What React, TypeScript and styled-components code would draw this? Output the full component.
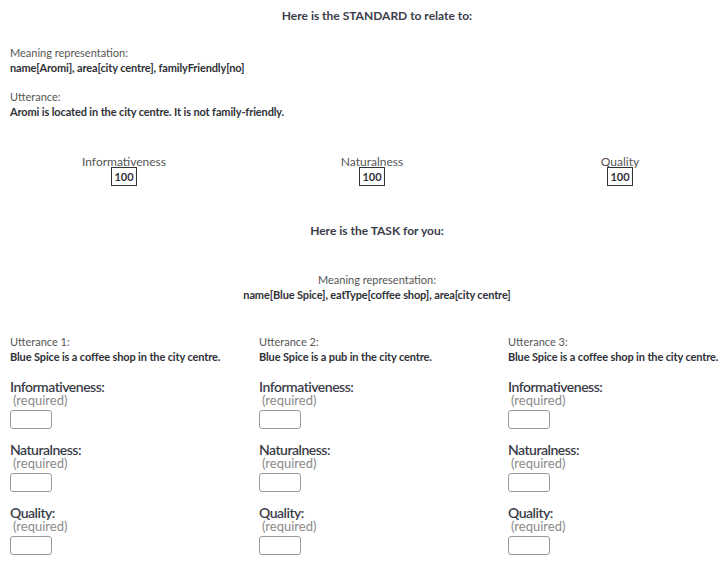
import React from 'react'
import styled, { createGlobalStyle } from 'styled-components';

const GlobalStyle = createGlobalStyle`
    html, body {
        margin: 0;
        padding: 0;
        overflow: hidden;
        background: #fff;
    }
    body {
        font-family: Lato, "Open Sans", sans-serif;
        color: #333;
    }
`;

const Page = styled.div`
    width: 734px;
    margin-left: 10px;
    padding-top: 9px;
`;

const Heading = styled.div`
    text-align: center;
    font-size: 12px;
    font-weight: 700;
    line-height: 14px;
    color: #3a3d48;
`;

const Block = styled.div<{ $center?: boolean; $top: number }>`
    margin-top: ${p => p.$top}px;
    text-align: ${p => (p.$center ? 'center' : 'left')};
    font-size: 11px;
    line-height: 15px;
`;

const Caption = styled.div`
    color: #555;
    font-weight: 400;
`;

const Value = styled.div`
    color: #2f3138;
    font-weight: 700;
    letter-spacing: -0.13px;
`;

const ScoreRow = styled.div`
    display: grid;
    grid-template-columns: 248px 248px 248px;
    margin-left: -10px;
    margin-top: 35px;
`;

const ScoreCell = styled.div`
    display: flex;
    flex-direction: column;
    align-items: center;
`;

const ScoreLabel = styled.div`
    font-size: 12px;
    line-height: 15px;
    color: #555;
    margin-bottom: -2px;
`;

const ScoreBox = styled.div`
    border: 1px solid #333;
    font-size: 11px;
    font-weight: 700;
    line-height: 17px;
    padding: 0 2px;
    color: #2f3138;
`;

const Columns = styled.div`
    display: grid;
    grid-template-columns: 249px 249px 249px;
    margin-top: 32px;
`;

const Column = styled.div`
    font-size: 11px;
    line-height: 15px;
`;

const RatingList = styled.div`
    padding-top: 2px;
`;

const Rating = styled.div`
    margin-top: 14px;
`;

const RatingLabel = styled.div`
    font-size: 14px;
    font-weight: 600;
    line-height: 14px;
    color: #3a3d48;
    letter-spacing: -0.5px;
`;

const Required = styled.div`
    font-size: 13px;
    line-height: 12px;
    color: #8a8a8a;
    padding-left: 3px;
`;

const Box = styled.input`
    display: block;
    box-sizing: border-box;
    width: 42px;
    height: 19px;
    margin-top: 4px;
    border: 1px solid #9a9a9a;
    border-radius: 3px;
    background: #fff;
    padding: 0;
`;

const scores = ['Informativeness', 'Naturalness', 'Quality'];

const utterances = [
    'Blue Spice is a coffee shop in the city centre.',
    'Blue Spice is a pub in the city centre.',
    'Blue Spice is a coffee shop in the city centre.',
];

export default function App() {
    return (
        <Page>
            <GlobalStyle />
            <Heading>Here is the STANDARD to relate to:</Heading>

            <Block $top={22}>
                <Caption>Meaning representation:</Caption>
                <Value>name[Aromi], area[city centre], familyFriendly[no]</Value>
            </Block>
            <Block $top={14}>
                <Caption>Utterance:</Caption>
                <Value>Aromi is located in the city centre. It is not family-friendly.</Value>
            </Block>

            <ScoreRow>
                {scores.map(s => (
                    <ScoreCell key={s}>
                        <ScoreLabel>{s}</ScoreLabel>
                        <ScoreBox>100</ScoreBox>
                    </ScoreCell>
                ))}
            </ScoreRow>

            <Block $top={38}>
                <Heading>Here is the TASK for you:</Heading>
            </Block>

            <Block $center $top={34}>
                <Caption>Meaning representation:</Caption>
                <Value>name[Blue Spice], eatType[coffee shop], area[city centre]</Value>
            </Block>

            <Columns>
                {utterances.map((u, i) => (
                    <Column key={i}>
                        <Caption>Utterance {i + 1}:</Caption>
                        <Value>{u}</Value>
                        <RatingList>
                            {scores.map(s => (
                                <Rating key={s}>
                                    <RatingLabel>{s}:</RatingLabel>
                                    <Required>(required)</Required>
                                    <Box type="text" />
                                </Rating>
                            ))}
                        </RatingList>
                    </Column>
                ))}
            </Columns>
        </Page>
    )
}
